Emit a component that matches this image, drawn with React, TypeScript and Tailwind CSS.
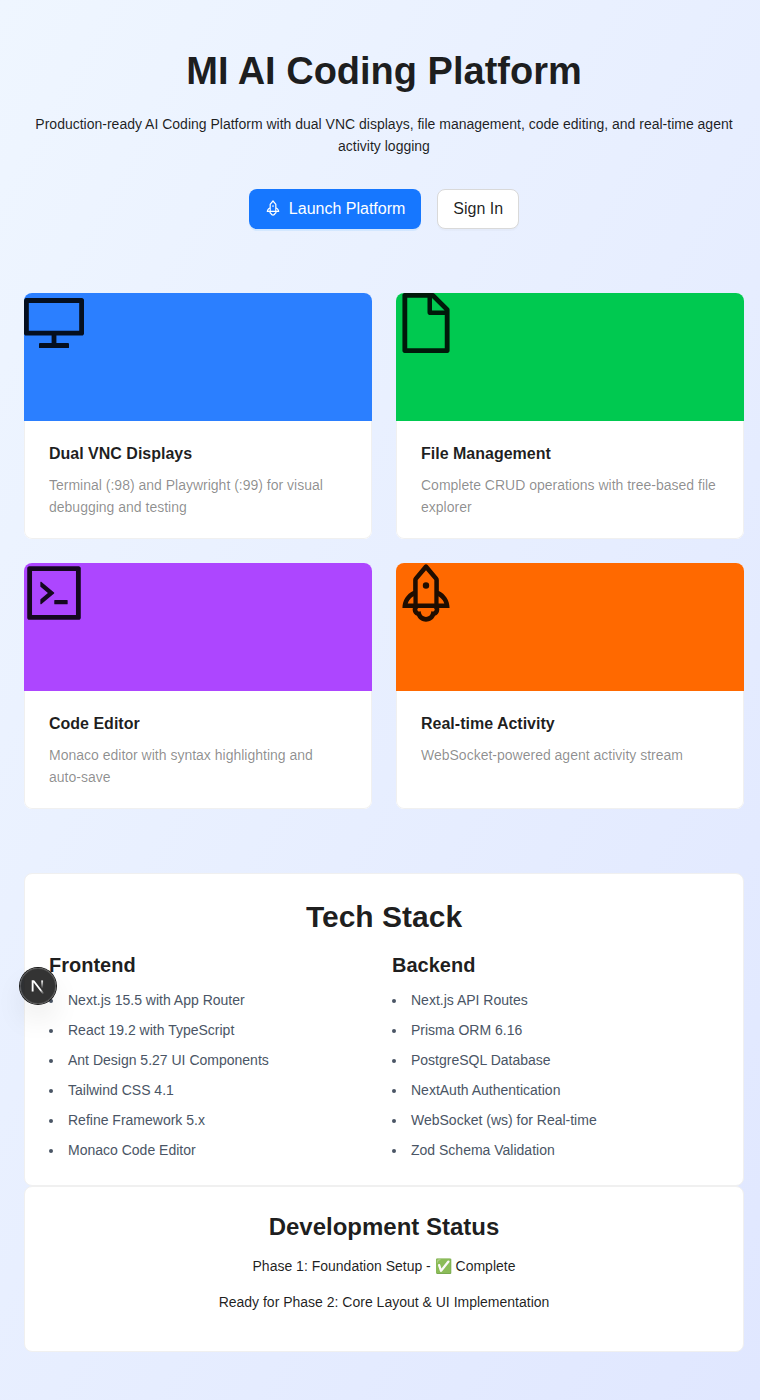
import type { ReactNode } from "react";
import type { IconType } from "react-icons";
import {
  AiOutlineCode,
  AiOutlineDesktop,
  AiOutlineFile,
  AiOutlineRocket,
} from "react-icons/ai";

type Feature = {
  title: string;
  description: string;
  icon: IconType;
  cover: string;
};

const features: Feature[] = [
  {
    title: "Dual VNC Displays",
    description: "Terminal (:98) and Playwright (:99) for visual debugging and testing",
    icon: AiOutlineDesktop,
    cover: "bg-[#2b7fff]",
  },
  {
    title: "File Management",
    description: "Complete CRUD operations with tree-based file explorer",
    icon: AiOutlineFile,
    cover: "bg-[#00c950]",
  },
  {
    title: "Code Editor",
    description: "Monaco editor with syntax highlighting and auto-save",
    icon: AiOutlineCode,
    cover: "bg-[#ad46ff]",
  },
  {
    title: "Real-time Activity",
    description: "WebSocket-powered agent activity stream",
    icon: AiOutlineRocket,
    cover: "bg-[#ff6900]",
  },
];

const stacks = [
  {
    name: "Frontend",
    items: [
      "Next.js 15.5 with App Router",
      "React 19.2 with TypeScript",
      "Ant Design 5.27 UI Components",
      "Tailwind CSS 4.1",
      "Refine Framework 5.x",
      "Monaco Code Editor",
    ],
  },
  {
    name: "Backend",
    items: [
      "Next.js API Routes",
      "Prisma ORM 6.16",
      "PostgreSQL Database",
      "NextAuth Authentication",
      "WebSocket (ws) for Real-time",
      "Zod Schema Validation",
    ],
  },
];

function FeatureCard({ title, description, icon: Icon, cover }: Feature) {
  return (
    <article className="flex flex-col overflow-hidden rounded-lg bg-white">
      <div className={`h-32 ${cover}`}>
        <Icon viewBox="64 64 896 896" className="block size-[60px]" aria-hidden="true" />
      </div>
      <div className="grow rounded-b-lg border border-t-0 border-[#f0f0f0] px-6 py-5">
        <h3 className="mb-2 text-base leading-[25px] font-semibold">{title}</h3>
        <p className="text-sm leading-[22px] text-black/45">{description}</p>
      </div>
    </article>
  );
}

function Panel({ children }: { children: ReactNode }) {
  return <section className="rounded-lg border border-[#f0f0f0] bg-white p-6">{children}</section>;
}

function DevToolsBadge() {
  return (
    <button
      type="button"
      aria-label="Open Next.js Dev Tools"
      className="absolute top-[968px] left-5 flex size-9 items-center justify-center rounded-full bg-black/80 shadow-[0_0_0_1px_#171717,inset_0_0_0_1px_rgba(255,255,255,0.14),0_16px_32px_-8px_rgba(0,0,0,0.24)] backdrop-blur-[48px]"
    >
      <svg viewBox="0 0 36 36" className="size-9" fill="none" aria-hidden="true">
        <defs>
          <linearGradient id="diagonal" x1="9.95555" y1="11.1226" x2="15.4778" y2="17.9671" gradientUnits="userSpaceOnUse">
            <stop stopColor="white" />
            <stop offset="0.604072" stopColor="white" stopOpacity="0" />
            <stop offset="1" stopColor="white" stopOpacity="0" />
          </linearGradient>
          <linearGradient id="stem" x1="11.8222" y1="1.40039" x2="11.793" y2="9.62542" gradientUnits="userSpaceOnUse">
            <stop stopColor="white" />
            <stop offset="1" stopColor="white" stopOpacity="0" />
          </linearGradient>
          <clipPath id="mark">
            <rect x="0" y="1.4" width="14" height="14" />
          </clipPath>
        </defs>
        <g transform="translate(10.3 10.8)" clipPath="url(#mark)">
          <path d="M13.3 15.2 L2.34 1 V12.6" stroke="url(#diagonal)" strokeWidth="1.86" />
          <path d="M11.825 1.4 V13.1" stroke="url(#stem)" strokeWidth="1.86" />
        </g>
      </svg>
    </button>
  );
}

export default function App() {
  return (
    <div className="relative min-h-screen bg-linear-to-br from-[#eff6ff] to-[#e0e7ff] py-12 pr-4 pl-6 font-['Liberation_Sans',Arial,sans-serif] text-sm leading-[22px] text-black/88">
      <main>
        <header className="mb-16 text-center">
          <h1 className="mb-[19px] text-[38px] leading-[46px] font-semibold">MI AI Coding Platform</h1>
          <p className="mb-8">
            Production-ready AI Coding Platform with dual VNC displays, file management, code editing,
            and real-time agent activity logging
          </p>
          <div className="flex justify-center gap-4 text-base">
            <button
              type="button"
              className="h-10 rounded-lg bg-[#1677ff] px-4 text-white shadow-[0_2px_0_rgba(5,145,255,0.1)]"
            >
              <AiOutlineRocket
                viewBox="64 64 896 896"
                className="mr-2 inline size-4 align-[-2px]"
                aria-hidden="true"
              />
              Launch Platform
            </button>
            <button
              type="button"
              className="h-10 rounded-lg border border-[#d9d9d9] bg-white px-[15px] shadow-[0_2px_0_rgba(0,0,0,0.02)]"
            >
              Sign In
            </button>
          </div>
        </header>

        <div className="mb-16 grid grid-cols-2 gap-6">
          {features.map((feature) => (
            <FeatureCard key={feature.title} {...feature} />
          ))}
        </div>

        <Panel>
          <h2 className="mb-[15px] text-center text-3xl leading-[38px] font-semibold">Tech Stack</h2>
          <div className="grid grid-cols-2 gap-4">
            {stacks.map((stack) => (
              <div key={stack.name}>
                <h3 className="mb-2.5 text-xl leading-7 font-semibold">{stack.name}</h3>
                <ul className="list-inside list-disc space-y-2 text-[#4a5565]">
                  {stack.items.map((item) => (
                    <li key={item}>{item}</li>
                  ))}
                </ul>
              </div>
            ))}
          </div>
        </Panel>

        <Panel>
          <div className="text-center">
            <h2 className="mb-3 text-2xl leading-8 font-semibold">Development Status</h2>
            <p className="mb-3.5">Phase 1: Foundation Setup - ✅ Complete</p>
            <p className="mb-3.5">Ready for Phase 2: Core Layout &amp; UI Implementation</p>
          </div>
        </Panel>
      </main>
      <DevToolsBadge />
    </div>
  );
}
